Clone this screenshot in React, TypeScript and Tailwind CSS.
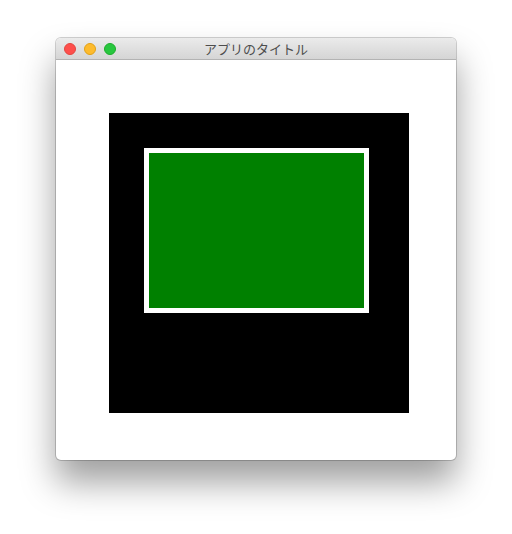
export default function App() {
  return (
    <div className="w-[512px] h-[534px] bg-white pt-[38px] pl-[56px]">
      <div className="w-[400px] rounded-[5px] overflow-hidden bg-white shadow-[0_22px_35px_rgba(0,0,0,0.38),0_0_0_1px_rgba(0,0,0,0.18)]">
        <div className="h-[22px] grid grid-cols-[1fr_auto_1fr] items-center bg-gradient-to-b from-[#ebebeb] to-[#d5d5d5] border-b border-[#b3b3b3]">
          <div className="flex items-center gap-[8px] pl-[8px]">
            <span className="w-[12px] h-[12px] rounded-full bg-[#fe4f4c] border border-[#e2463f]" />
            <span className="w-[12px] h-[12px] rounded-full bg-[#fdbb2d] border border-[#e1a116]" />
            <span className="w-[12px] h-[12px] rounded-full bg-[#28c73f] border border-[#1dad2b]" />
          </div>
          <div className="text-[13px] leading-none text-[#4d4d4d] font-['Noto_Sans_CJK_JP',sans-serif]">
            アプリのタイトル
          </div>
          <div />
        </div>
        <div className="h-[400px] pl-[53px] pt-[53px]">
          <div className="w-[300px] h-[300px] bg-black pl-[35px] pt-[35px]">
            <div className="w-[225px] h-[165px] border-[5px] border-white bg-[#008000]" />
          </div>
        </div>
      </div>
    </div>
  );
}
